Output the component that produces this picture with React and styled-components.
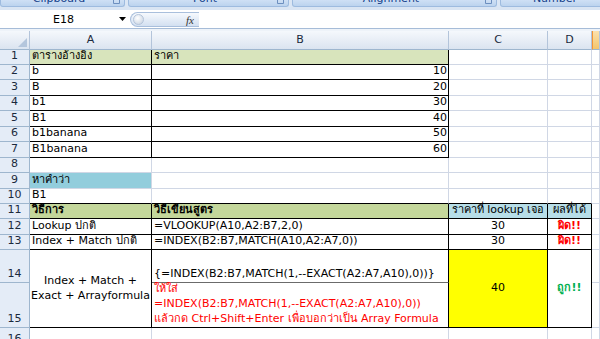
import React from 'react';
import styled, {createGlobalStyle} from 'styled-components';

const GlobalStyle = createGlobalStyle`
  html, body {
    margin: 0;
    padding: 0;
    background: #fff;
  }
  body {
    font-family: "DejaVu Sans", "Noto Sans", sans-serif;
  }
`;

const Sheet = styled.div`
  width: 600px;
  height: 339px;
  overflow: hidden;
  display: flex;
  flex-direction: column;
  background: #fff;
`;

// ribbon group captions, cut off at the top of the shot
const Ribbon = styled.div`
  height: 7px;
  flex: none;
  display: flex;
  gap: 3px;
  background: #dbe6f4;
  overflow: hidden;
`;

const RibbonGroup = styled.div`
  width: ${p => p.$w}px;
  flex: none;
  box-sizing: border-box;
  display: flex;
  align-items: flex-end;
  padding: 0 4px 1px;
  background: linear-gradient(#cfe0f5, #bcd3ee);
  border: 1px solid #9ebbdf;
  border-top: none;
  border-radius: 0 0 3px 3px;
  color: #15428b;
  font-size: 11px;
  line-height: 12px;
`;

const GroupLabel = styled.span`
  flex: 1;
  text-align: center;
  white-space: nowrap;
`;

const Launcher = styled.svg`
  flex: none;
  margin-bottom: 1px;
`;

const FormulaBar = styled.div`
  height: 24px;
  flex: none;
  box-sizing: border-box;
  display: flex;
  align-items: flex-start;
  padding-top: 3px;
  background: linear-gradient(#dae5f3 0, #dae5f3 3px, #fff 3px, #fff 21px, #a6bcd8 21px, #a6bcd8 22px, #eef3f9 22px);
`;

const NameBox = styled.div`
  width: 130px;
  height: 18px;
  flex: none;
  display: flex;
  align-items: center;
  background: #fff;
  font-size: 11px;
`;

const NameText = styled.span`
  flex: 1;
  text-align: center;
  padding-left: 8px;
`;

const DropArrow = styled.svg`
  flex: none;
  margin-right: 4px;
`;

const FxPill = styled.div`
  width: 69px;
  height: 15px;
  margin-top: 2px;
  flex: none;
  box-sizing: border-box;
  display: flex;
  align-items: center;
  justify-content: space-between;
  padding: 0 5px 0 2px;
  border: 1px solid #a9bfdc;
  border-right: none;
  border-radius: 8px 0 0 8px;
  background: linear-gradient(#f6f9fd, #d3e0f1);
`;

const Knob = styled.span`
  width: 9px;
  height: 9px;
  border-radius: 50%;
  background: radial-gradient(circle at 40% 35%, #fff, #c3cfdf);
  border: 1px solid #b4c4da;
`;

const Fx = styled.span`
  font-family: "Liberation Serif", serif;
  font-style: italic;
  font-size: 11px;
  color: #333;
`;

const FormulaInput = styled.div`
  flex: 1;
  height: 18px;
  background: #fff;
`;

const Grid = styled.div`
  display: grid;
  grid-template-columns: 30px 122px 297px 99px 44px 8px;
  grid-template-rows: 18.5px repeat(13, 15.46px) 32.5px 45px 20px;
  flex: none;
`;

const ColHead = styled.div`
  box-sizing: border-box;
  display: flex;
  align-items: center;
  justify-content: center;
  font-size: 11px;
  color: #1b2a3d;
  background: ${p => p.$active
    ? 'linear-gradient(#fbe1ad, #f3c56b)'
    : 'linear-gradient(#f5f8fc, #dbe4f0)'};
  border-right: 1px solid #b3c4da;
  border-bottom: 1px solid #9eb6ce;
  border-left: ${p => p.$active ? '1px solid #f29536' : 'none'};
`;

const Corner = styled(ColHead)`
  align-items: flex-end;
  justify-content: flex-end;
  padding: 0 2px 2px 0;
`;

const RowHead = styled.div`
  box-sizing: border-box;
  display: flex;
  align-items: flex-end;
  justify-content: center;
  padding-bottom: 1px;
  font-size: 11px;
  line-height: 14px;
  color: #1b2a3d;
  background: #e4ecf7;
  border-right: 1px solid #9eb6ce;
  border-bottom: 1px solid #9eb6ce;
`;

const Cell = styled.div`
  grid-row: span ${p => p.$rows || 1};
  box-sizing: border-box;
  min-width: 0;
  display: flex;
  flex-direction: column;
  justify-content: ${p => (p.$middle ? 'center' : 'flex-end')};
  align-items: ${p => ({left: 'flex-start', center: 'center', right: 'flex-end'}[p.$align || 'left'])};
  text-align: ${p => p.$align || 'left'};
  padding: 0 ${p => (p.$align === 'right' ? 1 : 2)}px 1px 2px;
  font-size: 11px;
  line-height: ${p => (p.$tall ? 15 : 14)}px;
  white-space: nowrap;
  font-weight: ${p => (p.$bold ? 'bold' : 'normal')};
  color: ${p => p.$color || '#000'};
  background: ${p => p.$bg || '#fff'};
  border-right: 1px solid ${p => (p.$r ? '#000' : '#d0d7e5')};
  border-bottom: 1px solid ${p => p.$under || (p.$b ? '#000' : '#d0d7e5')};
`;

const GREEN_LIGHT = '#d8e4bc';
const GREEN = '#c4d79b';
const AQUA = '#92cddc';
const AQUA_LIGHT = '#b7dee8';

const lookupRows = [
  ['b', 10],
  ['B', 20],
  ['b1', 30],
  ['B1', 40],
  ['b1banana', 50],
  ['B1banana', 60],
];

function EmptyCells({count, from = 0}) {
  return Array.from({length: count}, (_, i) => <Cell key={from + i} />);
}

export default function App() {
  return (
    <Sheet>
      <GlobalStyle />
      <Ribbon>
        <RibbonGroup $w={125}>
          <GroupLabel>Clipboard</GroupLabel>
          <Launcher width="7" height="5" viewBox="0 0 7 5">
            <path d="M0.5 0.5h6v4h-6z" fill="none" stroke="#6d8fbf" />
          </Launcher>
        </RibbonGroup>
        <RibbonGroup $w={161}>
          <GroupLabel>Font</GroupLabel>
          <Launcher width="7" height="5" viewBox="0 0 7 5">
            <path d="M0.5 0.5h6v4h-6z" fill="none" stroke="#6d8fbf" />
          </Launcher>
        </RibbonGroup>
        <RibbonGroup $w={205}>
          <GroupLabel>Alignment</GroupLabel>
          <Launcher width="7" height="5" viewBox="0 0 7 5">
            <path d="M0.5 0.5h6v4h-6z" fill="none" stroke="#6d8fbf" />
          </Launcher>
        </RibbonGroup>
        <RibbonGroup $w={110}>
          <GroupLabel>Number</GroupLabel>
        </RibbonGroup>
      </Ribbon>

      <FormulaBar>
        <NameBox>
          <NameText>E18</NameText>
          <DropArrow width="7" height="4" viewBox="0 0 7 4">
            <path d="M0 0h7L3.5 4z" fill="#000" />
          </DropArrow>
        </NameBox>
        <FxPill>
          <Knob />
          <Fx>fx</Fx>
        </FxPill>
        <FormulaInput />
      </FormulaBar>

      <Grid>
        <Corner>
          <svg width="9" height="9" viewBox="0 0 9 9">
            <path d="M9 0V9H0z" fill="#b4c6dc" />
          </svg>
        </Corner>
        <ColHead>A</ColHead>
        <ColHead>B</ColHead>
        <ColHead>C</ColHead>
        <ColHead>D</ColHead>
        <ColHead $active />

        {/* 1 */}
        <RowHead>1</RowHead>
        <Cell $bg={GREEN_LIGHT} $r $b>ตารางอ้างอิง</Cell>
        <Cell $bg={GREEN_LIGHT} $r $b>ราคา</Cell>
        <EmptyCells count={3} />

        {lookupRows.map(([name, price], i) => (
          <React.Fragment key={name}>
            <RowHead>{i + 2}</RowHead>
            <Cell $r $b>{name}</Cell>
            <Cell $r $b $align="right">{price}</Cell>
            <EmptyCells count={3} />
          </React.Fragment>
        ))}

        {/* 8 */}
        <RowHead>8</RowHead>
        <EmptyCells count={5} />

        {/* 9 */}
        <RowHead>9</RowHead>
        <Cell $bg={AQUA}>หาคำว่า</Cell>
        <EmptyCells count={4} />

        {/* 10 */}
        <RowHead>10</RowHead>
        <Cell $b>B1</Cell>
        <Cell $b />
        <Cell $b />
        <Cell $b />
        <Cell />

        {/* 11 */}
        <RowHead>11</RowHead>
        <Cell $bg={GREEN} $bold $r $b>วิธีการ</Cell>
        <Cell $bg={GREEN} $bold $r $b>วิธีเขียนสูตร</Cell>
        <Cell $bg={AQUA_LIGHT} $r $b $align="center">ราคาที่ lookup เจอ</Cell>
        <Cell $bg={AQUA_LIGHT} $r $b $align="center">ผลที่ได้</Cell>
        <Cell />

        {/* 12 */}
        <RowHead>12</RowHead>
        <Cell $r $b>Lookup ปกติ</Cell>
        <Cell $r $b>=VLOOKUP(A10,A2:B7,2,0)</Cell>
        <Cell $r $b $align="center">30</Cell>
        <Cell $r $b $align="center" $bold $color="#ff0000">ผิด!!</Cell>
        <Cell />

        {/* 13 */}
        <RowHead>13</RowHead>
        <Cell $r $b>Index + Match ปกติ</Cell>
        <Cell $r $b>=INDEX(B2:B7,MATCH(A10,A2:A7,0))</Cell>
        <Cell $r $b $align="center">30</Cell>
        <Cell $r $b $align="center" $bold $color="#ff0000">ผิด!!</Cell>
        <Cell />

        {/* 14 - 15 */}
        <RowHead>14</RowHead>
        <Cell $rows={2} $r $b $middle $align="center" $tall>
          <span>Index + Match +</span>
          <span>Exact + Arrayformula</span>
        </Cell>
        <Cell $r $under="#6b6b6b">{'{=INDEX(B2:B7,MATCH(1,--EXACT(A2:A7,A10),0))}'}</Cell>
        <Cell $rows={2} $r $b $middle $align="center" $bg="#ffff00">40</Cell>
        <Cell $rows={2} $r $b $middle $align="center" $bold $color="#00b050">ถูก!!</Cell>
        <Cell />

        <RowHead>15</RowHead>
        <Cell $r $b $tall $color="#ff0000">
          <span>ให้ใส่</span>
          <span>=INDEX(B2:B7,MATCH(1,--EXACT(A2:A7,A10),0))</span>
          <span>แล้วกด Ctrl+Shift+Enter เพื่อบอกว่าเป็น Array Formula</span>
        </Cell>
        <Cell />

        {/* 16 */}
        <RowHead>16</RowHead>
        <EmptyCells count={5} />
      </Grid>
    </Sheet>
  );
}
